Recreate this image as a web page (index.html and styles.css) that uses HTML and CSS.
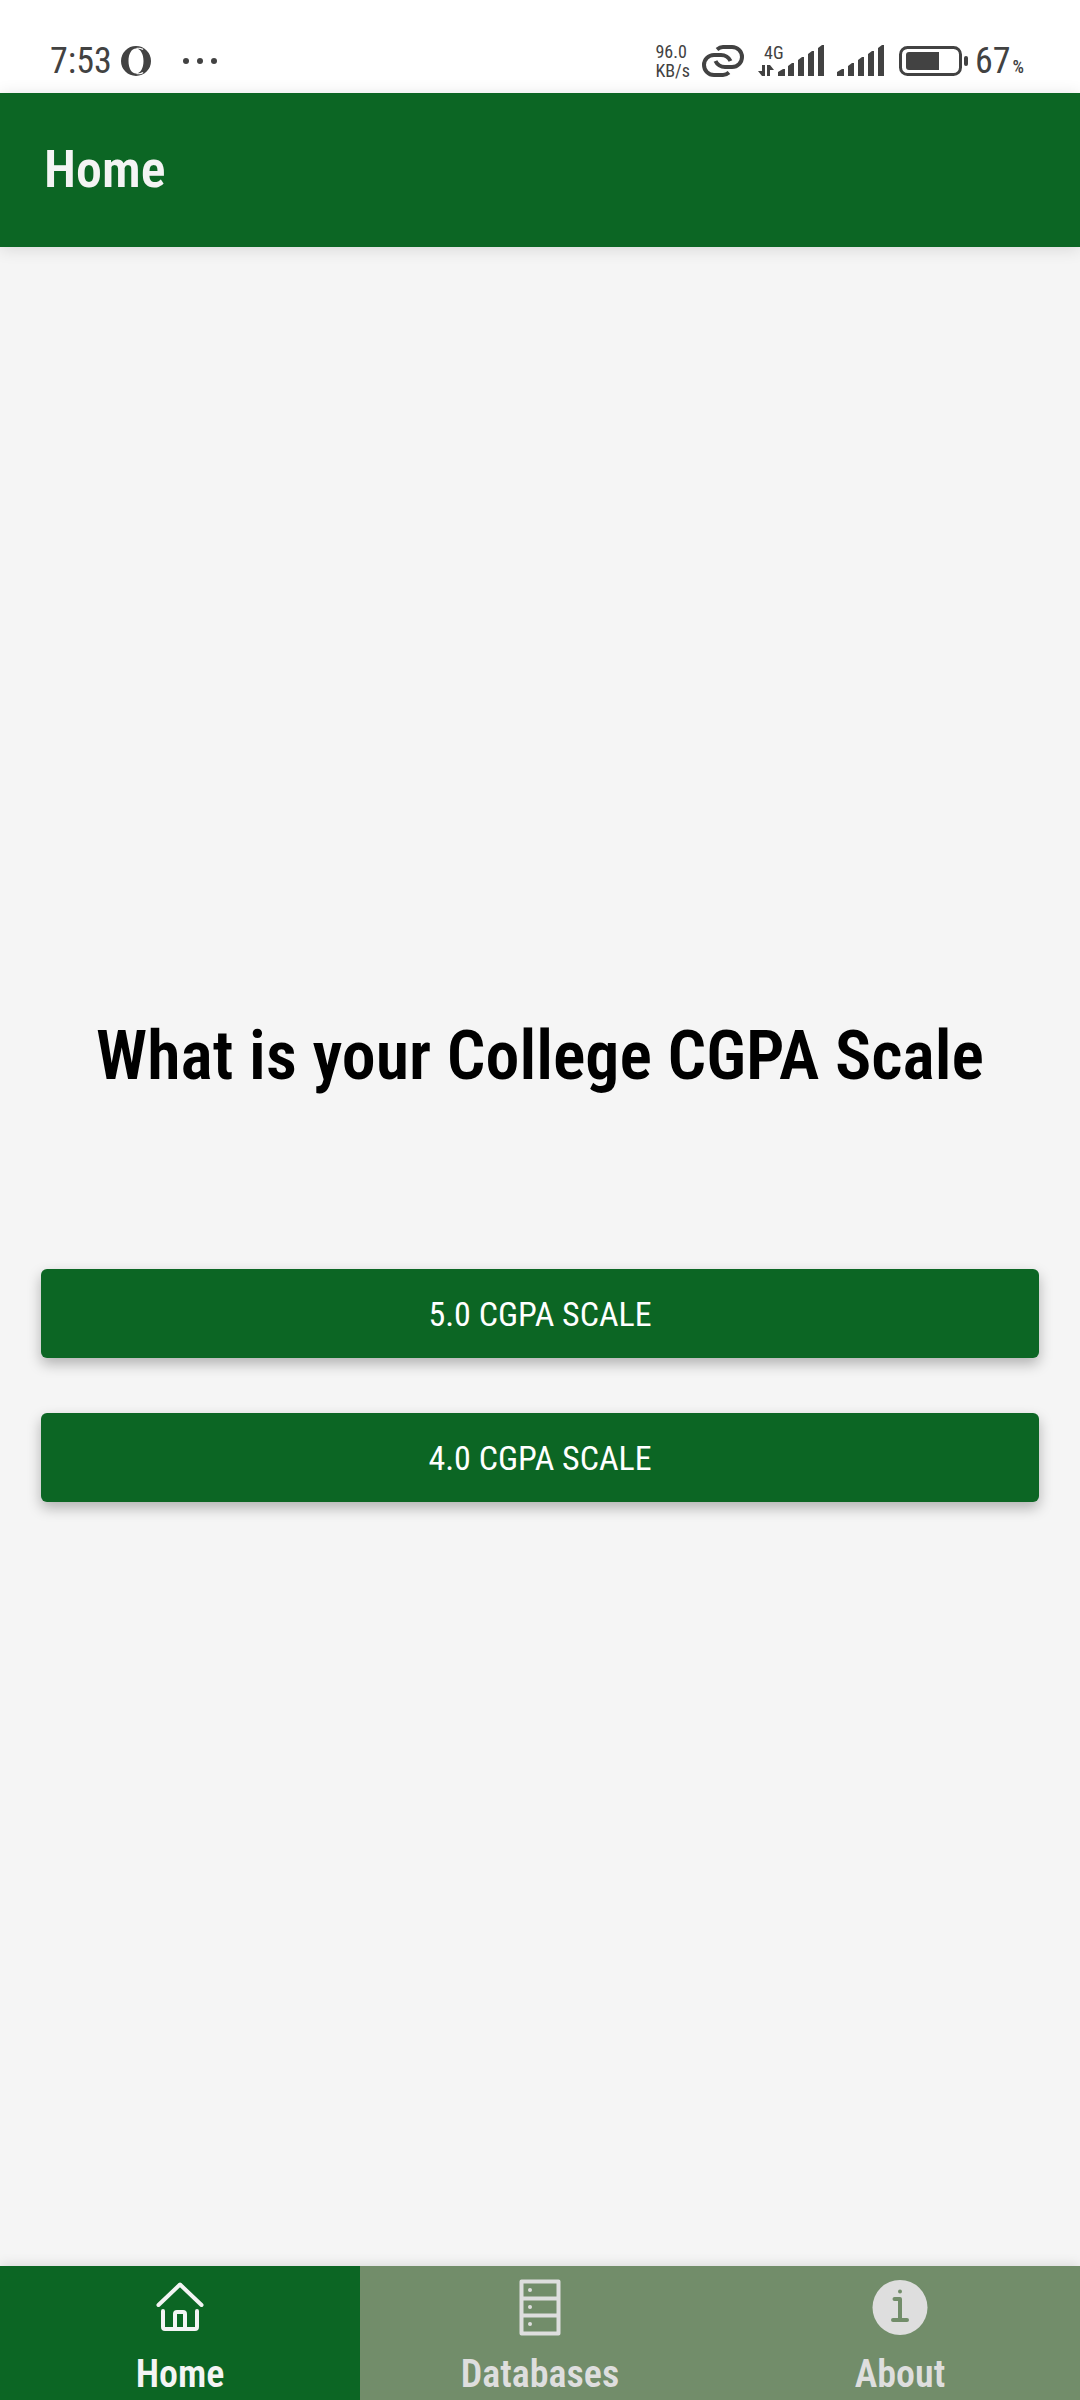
FILE: index.html
```html
<!DOCTYPE html>
<html lang="en">
<head>
<meta charset="utf-8">
<meta name="viewport" content="width=device-width, initial-scale=1">
<title>Home</title>
<link rel="stylesheet" href="styles.css">
</head>
<body>
<div class="app">
  <div class="status">
    <div class="status-left">
      <span class="clock">7:53</span>
      <svg class="opera" width="30" height="30" viewBox="0 0 30 30" aria-hidden="true">
        <path fill-rule="evenodd" d="M15 0a15 15 0 1 0 0 30a15 15 0 1 0 0-30zM15 2.500c4.500 0 7.500 5.500 7.500 12.500s-3 12.500-7.500 12.500S7.500 22 7.500 15S10.500 2.500 15 2.500z"/>
        <path class="cut" d="M15 2c3-.8 6 0 7.500 1l-1 1c-2-1.200-4-1.500-5.500-1zM15 28c3 .8 6 0 7.500-1l-1-1c-2 1.200-4 1.500-5.500 1z"/>
      </svg>
      <svg width="34" height="6" viewBox="0 0 34 6" aria-hidden="true"><circle cx="3" cy="3" r="3"/><circle cx="17" cy="3" r="3"/><circle cx="31" cy="3" r="3"/></svg>
    </div>
    <div class="status-right">
      <div class="speed"><span>96.0</span><span>KB/s</span></div>
      <svg class="link" width="42" height="32" viewBox="0 0 42 32" aria-hidden="true">
        <path d="M15 4.500c2-1.700 3.500-2.500 6-2.500h9a10 10 0 0 1 0 20h-7c-4 0-8-2.500-9.500-6"/>
        <path d="M27 27.500c-2 1.700-3.500 2.500-6 2.500h-9a10 10 0 0 1 0-20h7c4 0 8 2.500 9.500 6"/>
      </svg>
      <svg class="signal" width="67" height="34" viewBox="0 0 67 34" role="img" aria-label="4G signal">
        <text x="6" y="15">4G</text>
        <path d="M4 21h3v11H4L0 27h4zM9 32V21h3l4 5h-4v6zM20 32v-4l5-3h2v7zM30 32V22l4-3h2v13zM40 32V16l4-3h2v19zM50 32V10l4-3h2v25zM60 32V4l4-3h2v31z"/>
      </svg>
      <svg width="48" height="34" viewBox="0 0 48 34" aria-hidden="true"><path d="M0 32v-4l5-3h2v7zM11 32V22l4-3h2v13zM21 32V16l4-3h2v19zM31 32V10l4-3h2v25zM41 32V4l4-3h2v31z"/></svg>
      <div class="battery">
        <svg width="70" height="30" viewBox="0 0 70 30" aria-hidden="true"><rect class="shell" x="1.500" y="1.500" width="60" height="27" rx="7"/><path d="M10 6h30v18H10a3 3 0 0 1-3-3V9a3 3 0 0 1 3-3z"/><rect x="65" y="10" width="4" height="10" rx="2"/></svg>
        <span class="level">67</span><span class="percent">%</span>
      </div>
    </div>
  </div>
  <header class="topbar"><h1>Home</h1></header>
  <main class="content">
    <h2>What is your College CGPA Scale</h2>
    <div class="choices">
      <button type="button">5.0 CGPA SCALE</button>
      <button type="button">4.0 CGPA SCALE</button>
    </div>
  </main>
  <nav class="tabs">
    <a class="tab active" href="#home" aria-current="page">
      <svg width="56" height="56" viewBox="0 0 56 56" aria-hidden="true"><g class="line"><path d="M6.500 25 28 4.500 49.500 25"/><path d="M11 31v16q0 2 2 2h30q2 0 2-2V31M23 48V34q0-2 2-2h6q2 0 2 2v14"/></g></svg>
      <span>Home</span>
    </a>
    <a class="tab" href="#databases">
      <svg width="56" height="56" viewBox="0 0 56 56" aria-hidden="true"><path class="rack" d="M9.500 1.500h37v52h-37zM9.500 18.500h37M9.500 35.500h37"/><circle cx="18" cy="10" r="2"/><circle cx="18" cy="27" r="2"/><circle cx="18" cy="44" r="2"/></svg>
      <span>Databases</span>
    </a>
    <a class="tab" href="#about">
      <svg width="56" height="56" viewBox="0 0 56 56" aria-hidden="true"><circle cx="28" cy="27.500" r="27.500"/><circle class="dot" cx="28" cy="11.500" r="2"/><path class="info" d="M22.500 19H28v21M21 40h14"/></svg>
      <span>About</span>
    </a>
  </nav>
</div>
</body>
</html>
```
FILE: styles.css
```css
* { box-sizing: border-box; }
body {
  margin: 0;
  background: #f5f5f5;
  font-family: "Roboto Condensed", "Liberation Sans Narrow", "Arial Narrow", Roboto, sans-serif;
}
h1, h2 { margin: 0; }
svg { display: block; flex: none; overflow: visible; }
.app { min-height: 100vh; display: flex; flex-direction: column; }

.status {
  display: flex;
  justify-content: space-between;
  align-items: center;
  padding: 28px 56px 0 50px;
  height: 93px;
  background: #fff;
  color: #424242;
  fill: #424242;
}
.status-left, .status-right { display: flex; align-items: center; }
.clock { font-size: 36px; width: 71px; }
.opera { margin-right: 32px; }
.opera .cut { fill: #fff; }
.status-right { gap: 12px; }
.speed { display: flex; flex-direction: column; font-size: 18px; line-height: 19px; }
.link { fill: none; stroke: #424242; stroke-width: 4; }
.signal { margin-left: 2px; }
.signal text { font-size: 18px; }
.battery { display: flex; align-items: baseline; margin-left: 2px; }
.battery svg { align-self: center; margin-right: 6px; }
.shell { fill: none; stroke: #424242; stroke-width: 3; }
.level { font-size: 36px; line-height: 40px; }
.percent { font-size: 18px; font-weight: 500; margin-left: 2px; }

.topbar {
  display: flex;
  align-items: center;
  height: 154px;
  padding: 0 44px;
  background: #0c6624;
  color: #f4f4f4;
  box-shadow: 0 2px 16px rgba(0, 0, 0, .12);
}
.topbar h1 { font-size: 52px; line-height: 64px; font-weight: 600; }

.content {
  flex: 1;
  display: flex;
  flex-direction: column;
  justify-content: center;
  gap: 168px;
  padding: 0 41px;
}
.content h2 { font-size: 68px; line-height: 90px; font-weight: 600; text-align: center; color: #000; }
.choices { display: flex; flex-direction: column; gap: 55px; }
.choices button {
  height: 89px;
  padding: 0;
  border: 0;
  border-radius: 6px;
  background: #0c6624;
  color: #fff;
  font: inherit;
  font-size: 34px;
  box-shadow: 0 6px 14px rgba(0, 0, 0, .28);
}

.tabs {
  display: grid;
  grid-template-columns: repeat(3, 1fr);
  box-shadow: 0 -1px 12px rgba(0, 0, 0, .12);
}
.tab {
  display: flex;
  flex-direction: column;
  align-items: center;
  gap: 14px;
  padding: 14px 0 2px;
  background: #728d6a;
  color: #dedede;
  fill: #dedede;
  font-size: 38px;
  line-height: 48px;
  font-weight: 600;
  text-decoration: none;
}
.tab.active { background: #0c6624; color: #f4f4f4; }
.line { fill: none; stroke: #f4f4f4; stroke-width: 4; stroke-linecap: round; stroke-linejoin: round; }
.rack { fill: none; stroke: #dedede; stroke-width: 4; stroke-linejoin: round; }
.dot { fill: #728d6a; }
.info { fill: none; stroke: #728d6a; stroke-width: 4; stroke-linecap: round; stroke-linejoin: round; }
```
